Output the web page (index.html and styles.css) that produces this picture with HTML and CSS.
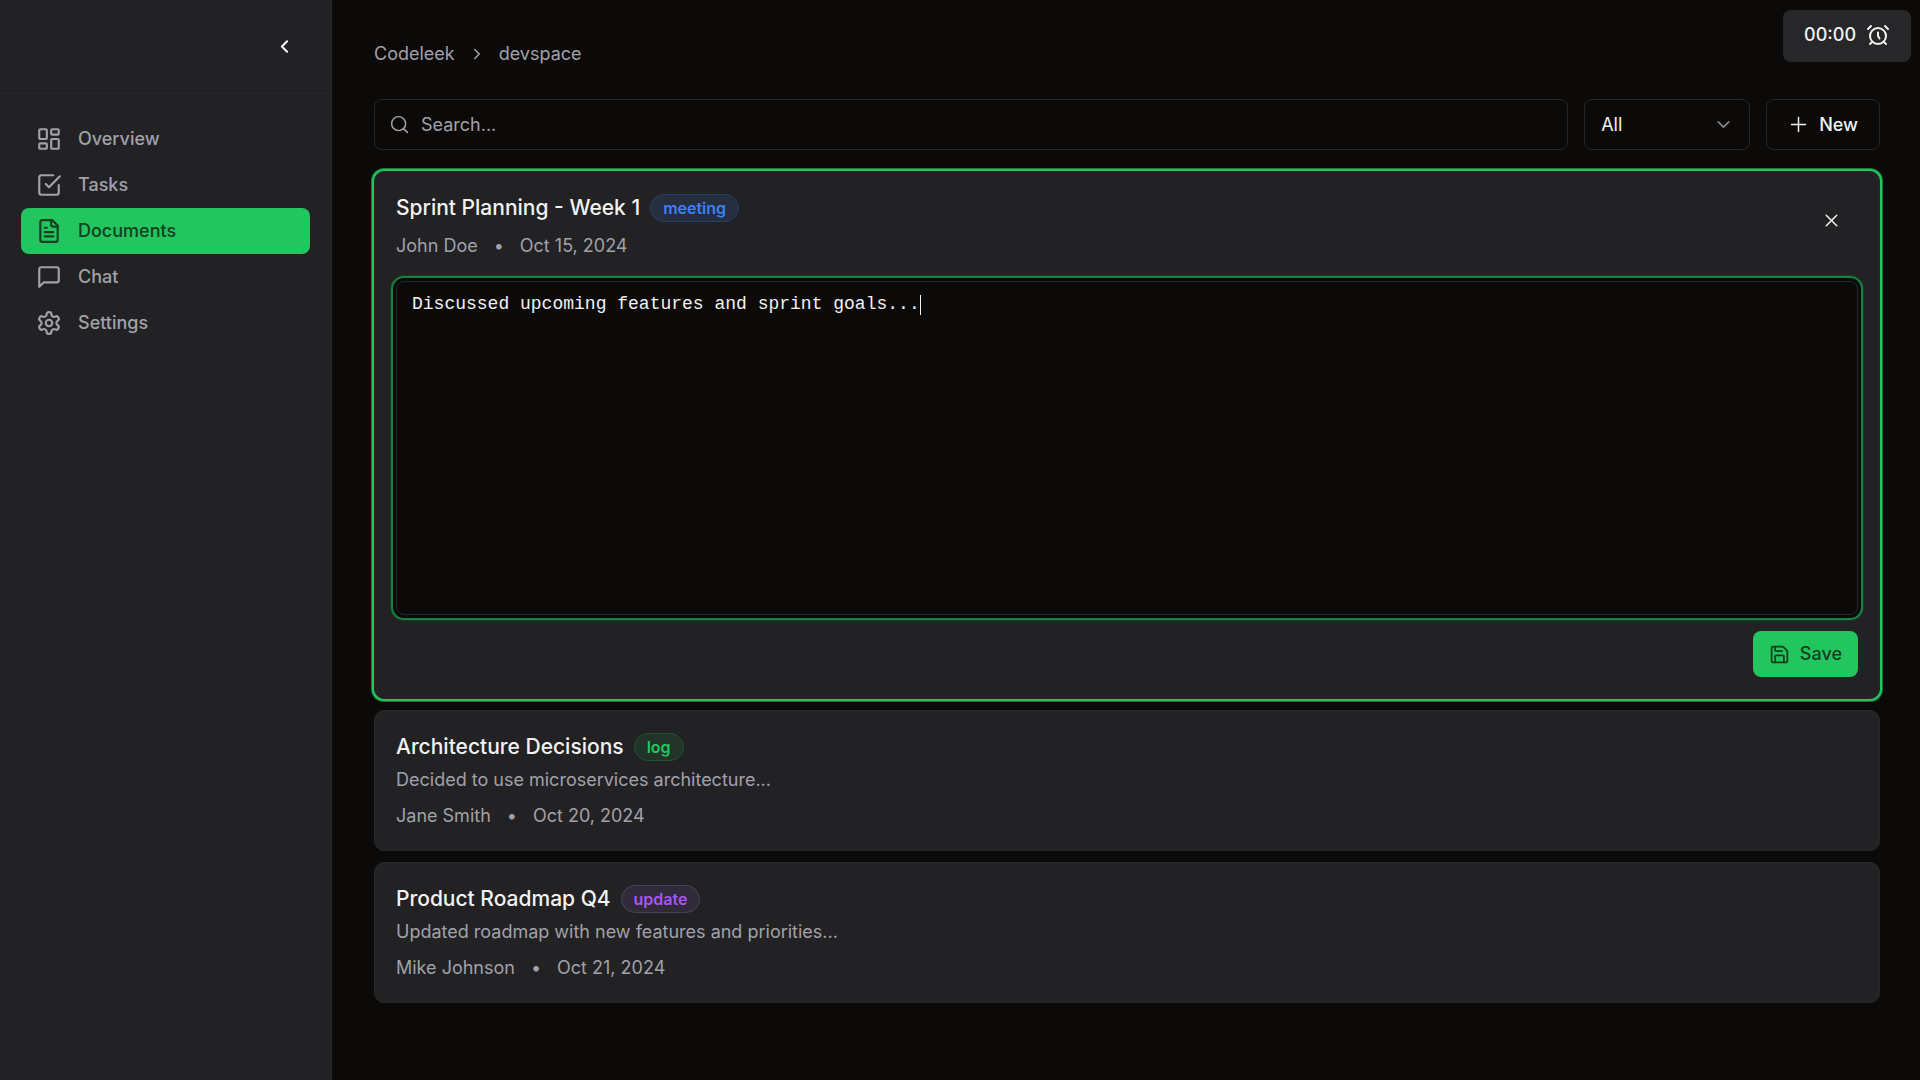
FILE: index.html
```html
<!DOCTYPE html>
<html lang="en">
<head>
    <meta charset="UTF-8">
    <meta name="viewport" content="width=device-width, initial-scale=1.0">
    <title>Documents</title>
    <link rel="stylesheet" href="styles.css">
</head>
<body>
    <aside class="sidebar">
        <div class="sidebar-header">
            <button class="icon-button" type="button" aria-label="Collapse sidebar">
                <svg class="icon icon-bold" viewBox="0 0 24 24"><path d="m15 18-6-6 6-6"/></svg>
            </button>
        </div>
        <nav class="sidebar-nav">
            <a class="nav-link" href="#overview">
                <svg class="icon icon-large" viewBox="0 0 24 24"><rect width="7" height="9" x="3" y="3" rx="1"/><rect width="7" height="5" x="14" y="3" rx="1"/><rect width="7" height="9" x="14" y="12" rx="1"/><rect width="7" height="5" x="3" y="16" rx="1"/></svg>
                Overview
            </a>
            <a class="nav-link" href="#tasks">
                <svg class="icon icon-large" viewBox="0 0 24 24"><path d="m9 11 3 3L22 4"/><path d="M21 12v7a2 2 0 0 1-2 2H5a2 2 0 0 1-2-2V5a2 2 0 0 1 2-2h11"/></svg>
                Tasks
            </a>
            <a class="nav-link active" href="#documents">
                <svg class="icon icon-large" viewBox="0 0 24 24"><path d="M15 2H6a2 2 0 0 0-2 2v16a2 2 0 0 0 2 2h12a2 2 0 0 0 2-2V7Z"/><path d="M14 2v4a2 2 0 0 0 2 2h4"/><path d="M10 9H8"/><path d="M16 13H8"/><path d="M16 17H8"/></svg>
                Documents
            </a>
            <a class="nav-link" href="#chat">
                <svg class="icon icon-large" viewBox="0 0 24 24"><path d="M21 15a2 2 0 0 1-2 2H7l-4 4V5a2 2 0 0 1 2-2h14a2 2 0 0 1 2 2z"/></svg>
                Chat
            </a>
            <a class="nav-link" href="#settings">
                <svg class="icon icon-large" viewBox="0 0 24 24"><path d="M12.22 2h-.44a2 2 0 0 0-2 2v.18a2 2 0 0 1-1 1.73l-.43.25a2 2 0 0 1-2 0l-.15-.08a2 2 0 0 0-2.73.73l-.22.38a2 2 0 0 0 .73 2.73l.15.1a2 2 0 0 1 1 1.72v.51a2 2 0 0 1-1 1.74l-.15.09a2 2 0 0 0-.73 2.73l.22.38a2 2 0 0 0 2.73.73l.15-.08a2 2 0 0 1 2 0l.43.25a2 2 0 0 1 1 1.73V20a2 2 0 0 0 2 2h.44a2 2 0 0 0 2-2v-.18a2 2 0 0 1 1-1.73l.43-.25a2 2 0 0 1 2 0l.15.08a2 2 0 0 0 2.73-.73l.22-.39a2 2 0 0 0-.73-2.73l-.15-.08a2 2 0 0 1-1-1.74v-.5a2 2 0 0 1 1-1.74l.15-.09a2 2 0 0 0 .73-2.73l-.22-.38a2 2 0 0 0-2.73-.73l-.15.08a2 2 0 0 1-2 0l-.43-.25a2 2 0 0 1-1-1.73V4a2 2 0 0 0-2-2z"/><circle cx="12" cy="12" r="3"/></svg>
                Settings
            </a>
        </nav>
    </aside>

    <main class="content">
        <nav class="breadcrumb" aria-label="Breadcrumb">
            <a href="#codeleek">Codeleek</a>
            <svg class="icon icon-small" viewBox="0 0 24 24"><path d="m9 18 6-6-6-6"/></svg>
            <a href="#devspace">devspace</a>
        </nav>

        <div class="toolbar">
            <label class="search">
                <svg class="icon icon-thin" viewBox="0 0 24 24"><circle cx="11" cy="11" r="8"/><path d="m21 21-4.3-4.3"/></svg>
                <input type="text" placeholder="Search..." aria-label="Search documents">
            </label>
            <div class="filter">
                <select aria-label="Filter by type">
                    <option>All</option>
                    <option>meeting</option>
                    <option>log</option>
                    <option>update</option>
                </select>
                <svg class="icon filter-arrow" viewBox="0 0 24 24"><path d="m6 9 6 6 6-6"/></svg>
            </div>
            <button class="new-button" type="button">
                <svg class="icon icon-thin" viewBox="0 0 24 24"><path d="M4 12h16"/><path d="M12 4v16"/></svg>
                New
            </button>
        </div>

        <div class="documents">
            <article class="card open">
                <div class="card-header">
                    <div>
                        <div class="card-title">
                            <h2>Sprint Planning - Week 1</h2>
                            <span class="badge meeting">meeting</span>
                        </div>
                        <p class="meta"><span>John Doe</span><span>•</span><span>Oct 15, 2024</span></p>
                    </div>
                    <button class="icon-button" type="button" aria-label="Close">
                        <svg class="icon icon-thin" viewBox="0 0 24 24"><path d="M18 6 6 18"/><path d="m6 6 12 12"/></svg>
                    </button>
                </div>
                <textarea id="editor" class="caret" aria-label="Document content" spellcheck="false">Discussed upcoming features and sprint goals...</textarea>
                <div class="card-actions">
                    <button class="save-button" type="button">
                        <svg class="icon" viewBox="0 0 24 24"><path d="M15.2 3a2 2 0 0 1 1.4.6l3.8 3.8a2 2 0 0 1 .6 1.4V19a2 2 0 0 1-2 2H5a2 2 0 0 1-2-2V5a2 2 0 0 1 2-2z"/><path d="M17 21v-7a1 1 0 0 0-1-1H8a1 1 0 0 0-1 1v7"/><path d="M7 3v4a1 1 0 0 0 1 1h7"/></svg>
                        Save
                    </button>
                </div>
            </article>

            <article class="card">
                <div class="card-title">
                    <h2>Architecture Decisions</h2>
                    <span class="badge log">log</span>
                </div>
                <p class="preview">Decided to use microservices architecture...</p>
                <p class="meta"><span>Jane Smith</span><span>•</span><span>Oct 20, 2024</span></p>
            </article>

            <article class="card">
                <div class="card-title">
                    <h2>Product Roadmap Q4</h2>
                    <span class="badge update">update</span>
                </div>
                <p class="preview">Updated roadmap with new features and priorities...</p>
                <p class="meta"><span>Mike Johnson</span><span>•</span><span>Oct 21, 2024</span></p>
            </article>
        </div>
    </main>

    <button class="timer" type="button">
        00:00
        <svg class="icon icon-timer" viewBox="0 0 24 24"><circle cx="12" cy="13" r="8"/><path d="M12 9.5v3.5l1.5 2.5"/><path d="M5 3 2 6"/><path d="m22 6-3-3"/><path d="M6.38 18.7 4 21"/><path d="M17.64 18.67 20 21"/></svg>
    </button>

    <script>
    var editor = document.getElementById('editor');
    editor.focus();
    editor.setSelectionRange(editor.value.length, editor.value.length);

    // go back to the browser's own caret once the user starts working
    function dropCaret() {
        editor.classList.remove('caret');
    }
    editor.onkeydown = dropCaret;
    editor.onmousedown = dropCaret;
    editor.onblur = dropCaret;
    </script>
</body>
</html>
```
FILE: styles.css
```css
* {
    box-sizing: border-box;
}
body {
    margin: 0;
    min-height: 100vh;
    display: flex;
    background-color: #0c0a09;
    color: #f2f2f2;
    font-family: Inter, sans-serif;
    font-size: 18px;
    line-height: 26px;
}
h2, p {
    margin: 0;
}
a {
    color: inherit;
    text-decoration: none;
}
button, input, select {
    font: inherit;
    color: inherit;
    background: none;
    border: 0;
    padding: 0;
}
button {
    cursor: pointer;
}

.icon {
    width: 21px;
    height: 21px;
    flex-shrink: 0;
    fill: none;
    stroke: currentColor;
    stroke-width: 2;
    stroke-linecap: round;
    stroke-linejoin: round;
}
.icon-large {
    width: 26px;
    height: 26px;
}
.icon-small {
    width: 18px;
    height: 18px;
}
.icon-timer {
    width: 24px;
    height: 24px;
}
.icon-thin {
    stroke-width: 1.7;
}
.icon-bold {
    stroke-width: 2.4;
}
.icon-button {
    width: 54px;
    height: 54px;
    display: flex;
    align-items: center;
    justify-content: center;
}

.sidebar {
    width: 332px;
    flex-shrink: 0;
    background-color: #222224;
    border-right: 1px solid #27272a;
}
.sidebar-header {
    height: 94px;
    padding: 0 20px;
    display: flex;
    align-items: center;
    justify-content: flex-end;
    border-bottom: 1px solid #27272a;
}
.sidebar-nav {
    padding: 22px 21px;
    display: flex;
    flex-direction: column;
}
.nav-link {
    height: 46px;
    padding: 0 15px;
    display: flex;
    align-items: center;
    gap: 16px;
    border-radius: 8px;
    color: #a1a1aa;
    font-weight: 500;
}
.nav-link.active {
    background-color: #22c55e;
    color: #14401f;
}

.content {
    flex: 1;
    min-width: 0;
    padding: 41px 40px 42px 42px;
}
.breadcrumb {
    display: flex;
    align-items: center;
    gap: 13px;
    color: #a1a1aa;
}
.toolbar {
    margin: 32px 0 21px;
    display: flex;
    gap: 16px;
}
.search, .filter select, .new-button {
    height: 51px;
    border: 1px solid #27272a;
    border-radius: 8px;
}
.search {
    flex: 1;
    padding: 0 14px;
    display: flex;
    align-items: center;
    gap: 11px;
    color: #a1a1aa;
}
.search input {
    flex: 1;
    outline: none;
}
.search input::placeholder {
    color: #a1a1aa;
    opacity: 1;
}
.filter {
    position: relative;
}
.filter select {
    width: 166px;
    padding: 0 16px;
    appearance: none;
}
.filter-arrow {
    position: absolute;
    top: 15px;
    right: 16px;
    color: #85858c;
    pointer-events: none;
}
.new-button {
    padding: 0 21px;
    display: flex;
    align-items: center;
    gap: 10px;
    font-weight: 500;
}

.documents {
    display: flex;
    flex-direction: column;
    gap: 11px;
}
.card {
    padding: 21px;
    background-color: #222224;
    border: 1px solid #27272a;
    border-radius: 10px;
}
.card.open {
    box-shadow: 0 0 0 2px #22c55e, 0 0 0 3px #157a3b;
}
.card-header {
    margin-bottom: 22px;
    display: flex;
    justify-content: space-between;
}
.card-title {
    display: flex;
    align-items: center;
    gap: 10px;
}
.card-title h2 {
    font-size: 21px;
    font-weight: 500;
    line-height: 29px;
}
.badge {
    padding: 0 12px;
    border: 1px solid;
    border-radius: 14px;
    font-size: 16px;
    font-weight: 600;
    line-height: 26px;
}
.badge.meeting {
    color: #3b82f6;
    background-color: #252d3e;
    border-color: #25406f;
}
.badge.log {
    color: #22c55e;
    background-color: #22332a;
    border-color: #20522f;
}
.badge.update {
    color: #a855f7;
    background-color: #302a3a;
    border-color: #4a4356;
}
.preview {
    margin-top: 6px;
    color: #a1a1aa;
}
.meta {
    margin-top: 10px;
    display: flex;
    gap: 16px;
    color: #a1a1aa;
}
.open .meta {
    margin-top: 11px;
}
textarea {
    display: block;
    width: 100%;
    height: 334px;
    padding: 9px 15px;
    background-color: #0c0a09;
    border: 1px solid #27272a;
    border-radius: 8px;
    color: #f2f2f2;
    font-family: "Liberation Mono", monospace;
    font-size: 18px;
    line-height: 26px;
    resize: none;
    outline: none;
    box-shadow: 0 0 0 3px #0c0a09, 0 0 0 5px #168040, 0 0 0 6px #1d3a28;
}
/* steady caret after the 47 characters of the note */
textarea.caret {
    caret-color: transparent;
    background-image: linear-gradient(#f2f2f2, #f2f2f2);
    background-repeat: no-repeat;
    background-size: 1px 20px;
    background-position: calc(15px + 47ch) 13px;
}
.card-actions {
    margin-top: 16px;
    display: flex;
    justify-content: flex-end;
}
.save-button {
    height: 46px;
    padding: 0 16px;
    display: flex;
    align-items: center;
    gap: 10px;
    background-color: #22c55e;
    border-radius: 8px;
    color: #14401f;
    font-weight: 500;
}

.timer {
    position: absolute;
    top: 10px;
    right: 9px;
    height: 52px;
    padding: 0 21px 2px;
    display: flex;
    align-items: center;
    gap: 10px;
    background-color: #27272a;
    border-radius: 8px;
    font-weight: 500;
}
```
